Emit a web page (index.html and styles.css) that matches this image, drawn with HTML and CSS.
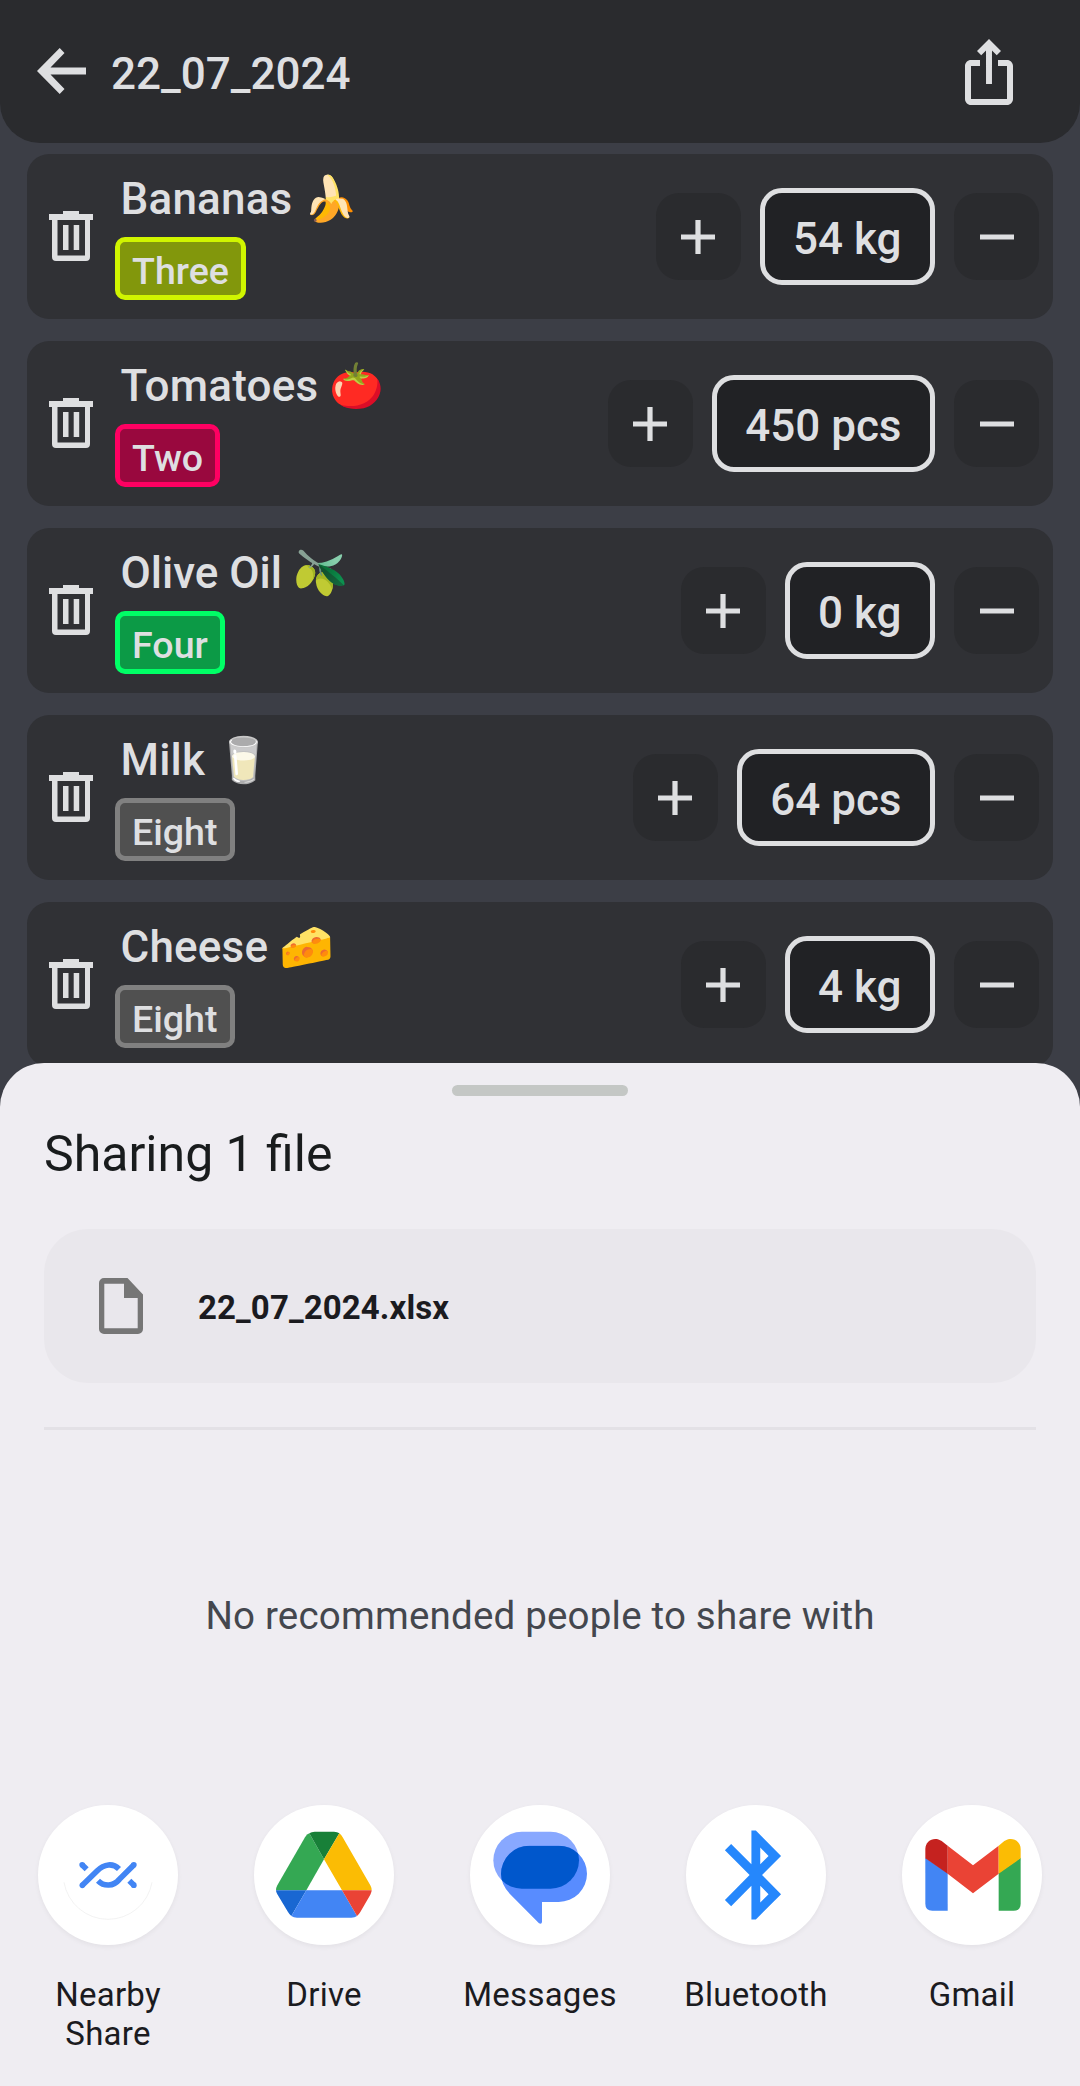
FILE: index.html
```html
<!DOCTYPE html>
<html lang="en">
<head>
<meta charset="utf-8">
<title>22_07_2024</title>
<link rel="stylesheet" href="styles.css">
</head>
<body>
<svg class="defs" width="0" height="0" aria-hidden="true">
  <symbol id="trash" viewBox="0 0 44 50">
    <path d="M14 0h16v3h14v6h-3v37a4 4 0 0 1-4 4H7a4 4 0 0 1-4-4V9H0V3h14zM8.500 9v35.500h27.500V9zM14 14h5.500v25H14zM24.700 14h5.500v25h-5.500z" fill="currentColor" fill-rule="evenodd"/>
  </symbol>
  <symbol id="plus" viewBox="0 0 34 34">
    <path d="M0 14.400h14.400V0h5.200v14.400H34v5.200H19.600V34h-5.200V19.600H0z" fill="currentColor"/>
  </symbol>
  <symbol id="minus" viewBox="0 0 34 34">
    <path d="M0 14.400h34v5.200H0z" fill="currentColor"/>
  </symbol>
</svg>

<div class="screen">
  <header class="topbar">
    <svg class="back" viewBox="0 0 49 46"><path d="M49 19.500H13.500L27.500 5 22.700 0 0 23l22.700 23 4.800-5-14-14.500H49z" fill="currentColor"/></svg>
    <h1 class="topbar-title">22_07_2024</h1>
    <svg class="share" viewBox="0 0 24 24"><path d="M16 5l-1.420 1.420-1.590-1.590V16h-1.980V4.830L9.420 6.420 8 5l4-4 4 4zm4 5v11c0 1.100-.9 2-2 2H6c-1.110 0-2-.9-2-2V10c0-1.110.89-2 2-2h3v2H6v11h12V10h-3V8h3c1.100 0 2 .89 2 2z" fill="currentColor"/></svg>
  </header>

  <main class="list">
    <article class="item">
      <svg class="trash"><use href="#trash"/></svg>
      <div class="info"><div class="name">Bananas <span class="emoji">🍌</span></div><span class="tag lime">Three</span></div>
      <div class="stepper"><button class="step"><svg><use href="#plus"/></svg></button><span class="amount">54 kg</span><button class="step"><svg><use href="#minus"/></svg></button></div>
    </article>
    <article class="item">
      <svg class="trash"><use href="#trash"/></svg>
      <div class="info"><div class="name">Tomatoes <span class="emoji">🍅</span></div><span class="tag pink">Two</span></div>
      <div class="stepper"><button class="step"><svg><use href="#plus"/></svg></button><span class="amount">450 pcs</span><button class="step"><svg><use href="#minus"/></svg></button></div>
    </article>
    <article class="item">
      <svg class="trash"><use href="#trash"/></svg>
      <div class="info"><div class="name tight">Olive Oil <span class="emoji">🫒</span></div><span class="tag green">Four</span></div>
      <div class="stepper"><button class="step"><svg><use href="#plus"/></svg></button><span class="amount">0 kg</span><button class="step"><svg><use href="#minus"/></svg></button></div>
    </article>
    <article class="item">
      <svg class="trash"><use href="#trash"/></svg>
      <div class="info"><div class="name">Milk <span class="emoji">🥛</span></div><span class="tag gray">Eight</span></div>
      <div class="stepper"><button class="step"><svg><use href="#plus"/></svg></button><span class="amount">64 pcs</span><button class="step"><svg><use href="#minus"/></svg></button></div>
    </article>
    <article class="item">
      <svg class="trash"><use href="#trash"/></svg>
      <div class="info"><div class="name">Cheese <span class="emoji">🧀</span></div><span class="tag gray">Eight</span></div>
      <div class="stepper"><button class="step"><svg><use href="#plus"/></svg></button><span class="amount">4 kg</span><button class="step"><svg><use href="#minus"/></svg></button></div>
    </article>
  </main>

  <section class="sheet">
    <div class="handle"></div>
    <h2 class="sheet-title">Sharing 1 file</h2>
    <div class="file">
      <svg class="file-icon" viewBox="0 0 44 56"><path d="M5 0h23.500L44 16.500V51a5 5 0 0 1-5 5H5a5 5 0 0 1-5-5V5a5 5 0 0 1 5-5zM5.300 5.700v44.600h33.400V20H25V5.700z" fill="currentColor" fill-rule="evenodd"/></svg>
      <span class="file-name">22_07_2024.xlsx</span>
    </div>
    <div class="divider"></div>
    <p class="empty">No recommended people to share with</p>
    <div class="apps">
      <div class="app">
        <svg class="app-icon" viewBox="0 0 420 420">
          <path d="M78 232a134 134 0 0 0 264 0" fill="none" stroke="#ececec" stroke-width="2"/>
          <g fill="none" stroke="#4285f4" stroke-width="17">
            <path d="M132 179l14 14M133 241l44-43c22-22 48-24 66-6M180 227c18 18 46 18 64-4l44-44M274 227l14 14"/>
          </g>
          <g fill="#4285f4"><circle cx="132.500" cy="179.500" r="8.500"/><circle cx="133" cy="241" r="8.500"/><circle cx="287.500" cy="179.500" r="8.500"/><circle cx="287.500" cy="240.500" r="8.500"/></g>
        </svg>
        <span class="app-name">Nearby<br>Share</span>
      </div>
      <div class="app">
        <svg class="app-icon" viewBox="0 0 420 420">
          <path d="M66 256q0-8 4-15l83-144q6-10 13-12l44 78-53 93z" fill="#34a853"/>
          <path d="M166 85q6-5 16-5h58q10 0 16 5l-46 78z" fill="#188038"/>
          <path d="M256 85q6 5 10 12l83 144q4 7 4 15h-89l-54-93z" fill="#fbbc04"/>
          <path d="M66 256h91l-45 77q-6-5-10-12l-32-53q-4-6-4-12z" fill="#1967d2"/>
          <path d="M157 256h107l45 77q-6 5-17 5H129q-10 0-17-5z" fill="#4285f4"/>
          <path d="M264 256h89q0 6-4 13l-30 52q-4 7-10 12z" fill="#ea4335"/>
        </svg>
        <span class="app-name">Drive</span>
      </div>
      <div class="app">
        <svg class="app-icon" viewBox="0 0 420 420">
          <clipPath id="bubble"><path d="M178 122h88a85 84.500 0 0 1 0 169h-50v60q-1 8-9 4l-85-86q-29-29-29-62a85 85 0 0 1 85-85z"/></clipPath>
          <rect x="70" y="80.500" width="257" height="170.500" rx="85.250" fill="#88a8ff"/>
          <path d="M178 122h88a85 84.500 0 0 1 0 169h-50v60q-1 8-9 4l-85-86q-29-29-29-62a85 85 0 0 1 85-85z" fill="#588cff"/>
          <rect x="70" y="80.500" width="257" height="170.500" rx="85.250" fill="#0057cc" clip-path="url(#bubble)"/>
        </svg>
        <span class="app-name">Messages</span>
      </div>
      <div class="app">
        <svg class="app-icon" viewBox="0 0 420 420"><path transform="translate(50.500 50) scale(13.250 13.350)" d="M17.710 7.710L12 2h-1v7.590L6.410 5 5 6.410 10.590 12 5 17.590 6.410 19 11 14.410V22h1l5.710-5.710-4.300-4.290 4.300-4.290zM13 5.830l1.880 1.880L13 9.590V5.830zm1.880 10.460L13 18.170v-3.760l1.880 1.880z" fill="#2587fc"/></svg>
        <span class="app-name">Bluetooth</span>
      </div>
      <div class="app">
        <svg class="app-icon" viewBox="0 0 420 420">
          <path d="M70 158l67 46v113H91q-21 0-21-21z" fill="#4285f4"/>
          <path d="M356 158l-66 46v113h45q21 0 21-21z" fill="#34a853"/>
          <path d="M137 122l76 59 77-59v84l-77 59-76-59z" fill="#ea4335"/>
          <path d="M70 160v-28c0-25 27-39 49-24l18 14v84z" fill="#c5221f"/>
          <path d="M356 160v-28c0-25-27-39-49-24l-17 14v84z" fill="#fbbc04"/>
        </svg>
        <span class="app-name">Gmail</span>
      </div>
    </div>
  </section>
</div>
</body>
</html>
```
FILE: styles.css
```css
* { box-sizing: border-box; }

body {
  margin: 0;
  background: #3c3e46;
  font-family: Roboto, "Liberation Sans", sans-serif;
  color: #dedfe1;
}

h1, h2, p { margin: 0; }
.defs { display: block; position: absolute; }
svg { display: block; flex: none; }

.screen {
  position: relative;
  width: 1080px;
  height: 2086px;
  overflow: hidden;
}

/* Top bar */
.topbar {
  display: flex;
  align-items: center;
  height: 143px;
  padding: 0 55px 0 37px;
  border-radius: 0 0 40px 40px;
  background: #2a2b2e;
}
.back { width: 49px; height: 46px; margin-bottom: 1px; }
.topbar-title {
  flex: 1;
  margin-left: 25px;
  padding-top: 4px;
  font-size: 44px;
  line-height: 52px;
  font-weight: 500;
}
.share { width: 72px; height: 72px; }

/* Product list */
.list {
  display: flex;
  flex-direction: column;
  gap: 22px;
  padding: 11px 27px 0;
}
.item {
  display: flex;
  height: 165px;
  padding: 0 14px 0 22px;
  border-radius: 22px;
  background: #303135;
  align-items: center;
}
.trash { width: 44px; height: 50px; margin-bottom: 1px; }
.info {
  flex: 1;
  align-self: stretch;
  margin-left: 22px;
  padding-top: 19px;
}
.name {
  height: 52px;
  margin: 0 0 12px 5.500px;
  font-size: 44px;
  line-height: 52px;
  font-weight: 500;
  letter-spacing: .2px;
  white-space: nowrap;
}
.name.tight { letter-spacing: 0; }
.emoji { font-family: "Noto Color Emoji", sans-serif; font-weight: 400; line-height: 1; }
.tag {
  display: inline-block;
  height: 63px;
  padding: 7px 12px 0;
  border: 5px solid;
  border-radius: 10px;
  font-size: 37.600px;
  line-height: 45px;
  font-weight: 500;
  vertical-align: top;
}
.lime { border-color: #d0f500; background: #82970c; }
.pink { border-color: #ff0062; background: #99083e; }
.green { border-color: #00ff66; background: #0c9a46; }
.gray { border-color: #808080; background: #505050; }
.tag { color: #dedfe1; }

.stepper { display: flex; align-items: center; gap: 19.500px; }
.step {
  display: flex;
  align-items: center;
  justify-content: center;
  width: 85px;
  height: 87px;
  padding: 1.400px 0 0;
  border: 0;
  border-radius: 23px;
  background: #2a2b2e;
  color: inherit;
}
.step svg { width: 34px; height: 34px; }
.amount {
  height: 97px;
  padding: 20px 28px 0;
  border: 5.500px solid #dedfe1;
  border-radius: 22px;
  background: #212225;
  font-size: 44px;
  line-height: 52px;
  font-weight: 500;
  white-space: nowrap;
}

/* Share sheet, laid over the list */
.sheet {
  position: absolute;
  inset: 1063px 0 0;
  padding: 22px 44px 0;
  border-radius: 44px 44px 0 0;
  background: #efedf2;
  color: #1b1b1f;
}
.handle {
  width: 176px;
  height: 11px;
  margin: 0 auto;
  border-radius: 6px;
  background: #c4c7c5;
}
.sheet-title {
  margin-top: 29px;
  height: 104px;
  font-size: 50px;
  line-height: 58px;
  font-weight: 400;
  color: #191c1d;
}
.file {
  display: flex;
  align-items: center;
  height: 154px;
  padding-left: 55px;
  border-radius: 44px;
  background: #e9e7ec;
}
.file-icon { width: 44px; height: 56px; color: #767676; }
.file-name { margin-left: 55px; padding-top: 2px; font-size: 33px; font-weight: 700; letter-spacing: .1px; }
.divider { height: 3px; margin-top: 44px; background: #e3e1e6; }
.empty {
  margin-top: 163px;
  height: 212px;
  font-size: 38.500px;
  line-height: 46px;
  letter-spacing: .2px;
  text-align: center;
  color: #44474e;
}
.apps { display: grid; grid-template-columns: repeat(5, 216px); margin: 0 -44px; }
.app { display: flex; flex-direction: column; align-items: center; }
.app-icon {
  width: 140px;
  height: 140px;
  border-radius: 50%;
  background: #fff;
  box-shadow: 0 2px 5px rgba(0, 0, 0, .05);
}
.app-name {
  margin-top: 30px;
  font-size: 33px;
  line-height: 39px;
  text-align: center;
  letter-spacing: .25px;
}
```
